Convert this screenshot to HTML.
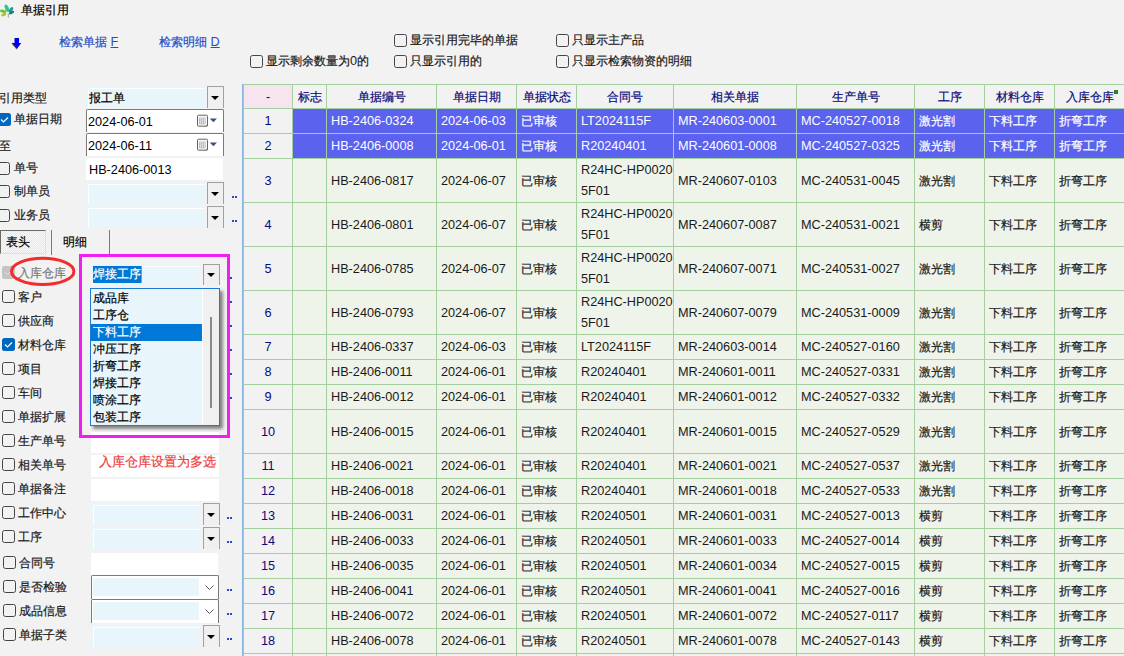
<!DOCTYPE html><html><head><meta charset="utf-8"><style>
html,body{margin:0;padding:0;}
body{width:1124px;height:656px;overflow:hidden;position:relative;background:#f2f2f2;font-family:"Liberation Sans",sans-serif;font-size:12.7px;color:#1a1a1a;}
div{position:absolute;box-sizing:border-box;}
.tx{white-space:nowrap;}
i{font-style:normal;font-size:12px;-webkit-text-stroke:0.2px currentColor;}

.cb{width:13px;height:13px;border:1px solid #444;border-radius:2.5px;background:#fff0;}
.cbk{width:13px;height:13px;border-radius:2.5px;background:#0067c0;}
.lb{background:#e8f6fb;}
.btn{border:1px solid #a0a0a0;border-bottom:none;background:#f0f0f0;}
.tri{width:0;height:0;border-left:4px solid transparent;border-right:4px solid transparent;border-top:4px solid #000;}
.dots{width:5px;height:2px;background:linear-gradient(90deg,#2848c8 0 2px,transparent 2px 3px,#2848c8 3px 5px);}
.wh{background:#fff;}
</style></head><body>
<svg style="position:absolute;left:0;top:0" width="18" height="19" viewBox="0 0 18 19">
<ellipse cx="3.2" cy="11.3" rx="3.4" ry="1.5" transform="rotate(12 3.2 11.3)" fill="#78c03a"/>
<ellipse cx="3.8" cy="14.6" rx="2.8" ry="1.5" transform="rotate(-22 3.8 14.6)" fill="#a6c82e"/>
<ellipse cx="6.9" cy="8.3" rx="1.9" ry="4.0" transform="rotate(-22 6.9 8.3)" fill="#2ec48e"/>
<ellipse cx="11" cy="9.8" rx="1.6" ry="3.0" transform="rotate(35 11 9.8)" fill="#1c9a92"/>
<ellipse cx="11.6" cy="12.6" rx="2.9" ry="1.4" transform="rotate(-25 11.6 12.6)" fill="#168078"/>
<path d="M8.3 13.5 L8.4 17.5" stroke="#9a9a9a" stroke-width="0.9"/>
</svg>
<div class="tx" style="left:21px;top:0px;height:21px;line-height:21px;color:#000;"><i>单据引用</i></div>
<svg style="position:absolute;left:10px;top:36px" width="14" height="15" viewBox="0 0 14 15">
<path d="M2 7 L7 13" stroke="#6a6a40" stroke-width="1.2"/>
<path d="M4.5 2 H9 V7 H11.3 L7 12.8 L2 7 H4.5Z" fill="#0000f0"/></svg>
<div class="tx" style="left:59px;top:32px;height:20px;line-height:20px;color:#1f4fc8;"><i>检索单据</i> <u>F</u></div>
<div class="tx" style="left:159px;top:32px;height:20px;line-height:20px;color:#1f4fc8;"><i>检索明细</i> <u>D</u></div>
<div class="cb" style="left:250px;top:55px;"></div>
<div class="tx" style="left:266px;top:51px;height:21px;line-height:21px;"><i>显示剩余数量为</i>0<i>的</i></div>
<div class="cb" style="left:394px;top:34px;"></div>
<div class="tx" style="left:410px;top:30px;height:21px;line-height:21px;"><i>显示引用完毕的单据</i></div>
<div class="cb" style="left:394px;top:55px;"></div>
<div class="tx" style="left:410px;top:51px;height:21px;line-height:21px;"><i>只显示引用的</i></div>
<div class="cb" style="left:556px;top:34px;"></div>
<div class="tx" style="left:572px;top:30px;height:21px;line-height:21px;"><i>只显示主产品</i></div>
<div class="cb" style="left:556px;top:55px;"></div>
<div class="tx" style="left:572px;top:51px;height:21px;line-height:21px;"><i>只显示检索物资的明细</i></div>
<div class="tx" style="left:-1px;top:88px;height:21px;line-height:21px;"><i>引用类型</i></div>
<div style="left:86px;top:86px;width:119px;height:22px;background:#e8f6fb;"></div>
<div style="left:88px;top:88px;width:117px;height:20px;border-top:1px solid #fff;border-left:1px solid #fff;"></div>
<div style="left:207px;top:86px;width:17px;height:22px;border:1px solid #a0a0a0;border-bottom:none;background:#f0f0f0;"></div>
<div class="tri" style="left:211px;top:96px;"></div>
<div class="tx" style="left:89px;top:87px;height:22px;line-height:22px;color:#000;"><i>报工单</i></div>
<div class="cbk" style="left:-2px;top:113px;"></div>
<svg style="position:absolute;left:-2px;top:113px" width="13" height="13"><path d="M3 6.5 L5.5 9 L10 4.5" stroke="#fff" stroke-width="1.1" fill="none"/></svg>
<div class="tx" style="left:14px;top:109px;height:21px;line-height:21px;"><i>单据日期</i></div>
<div style="left:86px;top:109px;width:138px;height:23px;background:#fff;border:1px solid #7a7a7a;border-bottom:none;border-radius:2px 2px 0 0;"></div>
<div class="tx" style="left:88px;top:111px;height:23px;line-height:23px;color:#000;">2024-06-01</div>
<svg style="position:absolute;left:196px;top:114px" width="24" height="14" viewBox="0 0 24 14"><rect x="1.5" y="1.2" width="10" height="11" rx="1" fill="#f6f7fb" stroke="#6e605c"/><rect x="3" y="3.6" width="6.6" height="6.8" fill="#b8bcc6"/><g fill="#fff"><rect x="3.9" y="4.4" width="1" height="1"/><rect x="5.9" y="4.4" width="1" height="1"/><rect x="7.9" y="4.4" width="1" height="1"/><rect x="3.9" y="6.4" width="1" height="1"/><rect x="5.9" y="6.4" width="1" height="1"/><rect x="7.9" y="6.4" width="1" height="1"/><rect x="3.9" y="8.4" width="1" height="1"/><rect x="5.9" y="8.4" width="1" height="1"/><rect x="7.9" y="8.4" width="1" height="1"/></g><path d="M9.5 12.2 L11.5 10.2 L11.5 12.2Z" fill="#6e605c"/><path d="M14 9 L21 9" stroke="#fff" /><path d="M13.8 4.5 H21 L17.4 8.3Z" fill="#3a5080"/></svg>
<div class="tx" style="left:-1px;top:136px;height:21px;line-height:21px;"><i>至</i></div>
<div style="left:86px;top:133px;width:138px;height:23px;background:#fff;border:1px solid #7a7a7a;border-bottom:none;border-radius:2px 2px 0 0;"></div>
<div class="tx" style="left:88px;top:135px;height:23px;line-height:23px;color:#000;">2024-06-11</div>
<svg style="position:absolute;left:196px;top:138px" width="24" height="14" viewBox="0 0 24 14"><rect x="1.5" y="1.2" width="10" height="11" rx="1" fill="#f6f7fb" stroke="#6e605c"/><rect x="3" y="3.6" width="6.6" height="6.8" fill="#b8bcc6"/><g fill="#fff"><rect x="3.9" y="4.4" width="1" height="1"/><rect x="5.9" y="4.4" width="1" height="1"/><rect x="7.9" y="4.4" width="1" height="1"/><rect x="3.9" y="6.4" width="1" height="1"/><rect x="5.9" y="6.4" width="1" height="1"/><rect x="7.9" y="6.4" width="1" height="1"/><rect x="3.9" y="8.4" width="1" height="1"/><rect x="5.9" y="8.4" width="1" height="1"/><rect x="7.9" y="8.4" width="1" height="1"/></g><path d="M9.5 12.2 L11.5 10.2 L11.5 12.2Z" fill="#6e605c"/><path d="M14 9 L21 9" stroke="#fff" /><path d="M13.8 4.5 H21 L17.4 8.3Z" fill="#3a5080"/></svg>
<div class="cb" style="left:-3px;top:162px;"></div>
<div class="tx" style="left:14px;top:158px;height:21px;line-height:21px;"><i>单号</i></div>
<div style="left:86px;top:158px;width:137px;height:22px;background:#fff;"></div>
<div class="tx" style="left:89px;top:159px;height:23px;line-height:23px;color:#000;">HB-2406-0013</div>
<div class="cb" style="left:-3px;top:185px;"></div>
<div class="tx" style="left:14px;top:181px;height:21px;line-height:21px;"><i>制单员</i></div>
<div style="left:86px;top:182px;width:119px;height:22px;background:#e8f6fb;"></div>
<div style="left:88px;top:184px;width:117px;height:20px;border-top:1px solid #fff;border-left:1px solid #fff;"></div>
<div style="left:207px;top:182px;width:17px;height:22px;border:1px solid #a0a0a0;border-bottom:none;background:#f0f0f0;"></div>
<div class="tri" style="left:211px;top:192px;"></div>
<div class="dots" style="left:232px;top:196px;"></div>
<div class="cb" style="left:-3px;top:209px;"></div>
<div class="tx" style="left:14px;top:205px;height:21px;line-height:21px;"><i>业务员</i></div>
<div style="left:86px;top:206px;width:119px;height:22px;background:#e8f6fb;"></div>
<div style="left:88px;top:208px;width:117px;height:20px;border-top:1px solid #fff;border-left:1px solid #fff;"></div>
<div style="left:207px;top:206px;width:17px;height:22px;border:1px solid #a0a0a0;border-bottom:none;background:#f0f0f0;"></div>
<div class="tri" style="left:211px;top:216px;"></div>
<div class="dots" style="left:232px;top:220px;"></div>
<div style="left:0px;top:230px;width:46px;height:24px;border-top:1px solid #6a6a6a;border-left:1px solid #6a6a6a;border-right:1px solid #e0e0e0;border-bottom:1px solid #e0e0e0;background-color:#fafafa;background-image:repeating-conic-gradient(#e6e6e6 0 25%,#fafafa 0 50%);background-size:2px 2px;"></div>
<div class="tx" style="left:6px;top:231px;height:22px;line-height:22px;color:#000;"><i>表头</i></div>
<div style="left:51px;top:230px;width:1px;height:25px;background:#7a7a7a;"></div>
<div class="tx" style="left:63px;top:231px;height:22px;line-height:22px;color:#000;"><i>明细</i></div>
<div style="left:109px;top:230px;width:1px;height:25px;background:#7a7a7a;"></div>
<div style="left:2px;top:266px;width:13px;height:13px;border-radius:2.5px;background:#c4c4c4;"></div>
<svg style="position:absolute;left:2px;top:266px" width="13" height="13"><path d="M3.5 6.5 L5.5 8.5 L9.5 4.5" stroke="#e6e6e6" stroke-width="1" fill="none"/></svg>
<div class="tx" style="left:18px;top:263px;height:21px;line-height:21px;color:#7a7a7a;"><i>入库仓库</i></div>
<div class="cb" style="left:2px;top:290px;"></div>
<div class="tx" style="left:18px;top:287px;height:21px;line-height:21px;"><i>客户</i></div>
<div class="cb" style="left:2px;top:314px;"></div>
<div class="tx" style="left:18px;top:311px;height:21px;line-height:21px;"><i>供应商</i></div>
<div class="cbk" style="left:2px;top:338px;"></div>
<svg style="position:absolute;left:2px;top:338px" width="13" height="13"><path d="M3 6.5 L5.5 9 L10 4.5" stroke="#fff" stroke-width="1.1" fill="none"/></svg>
<div class="tx" style="left:18px;top:335px;height:21px;line-height:21px;"><i>材料仓库</i></div>
<div class="cb" style="left:2px;top:362px;"></div>
<div class="tx" style="left:18px;top:359px;height:21px;line-height:21px;"><i>项目</i></div>
<div class="cb" style="left:2px;top:386px;"></div>
<div class="tx" style="left:18px;top:383px;height:21px;line-height:21px;"><i>车间</i></div>
<div class="cb" style="left:2px;top:410px;"></div>
<div class="tx" style="left:18px;top:407px;height:21px;line-height:21px;"><i>单据扩展</i></div>
<div class="cb" style="left:2px;top:434px;"></div>
<div class="tx" style="left:18px;top:431px;height:21px;line-height:21px;"><i>生产单号</i></div>
<div class="cb" style="left:2px;top:458px;"></div>
<div class="tx" style="left:18px;top:455px;height:21px;line-height:21px;"><i>相关单号</i></div>
<div class="cb" style="left:2px;top:482px;"></div>
<div class="tx" style="left:18px;top:479px;height:21px;line-height:21px;"><i>单据备注</i></div>
<div class="cb" style="left:2px;top:506px;"></div>
<div class="tx" style="left:18px;top:503px;height:21px;line-height:21px;"><i>工作中心</i></div>
<div class="cb" style="left:2px;top:530px;"></div>
<div class="tx" style="left:18px;top:527px;height:21px;line-height:21px;"><i>工序</i></div>
<div class="cb" style="left:3px;top:556px;"></div>
<div class="tx" style="left:19px;top:553px;height:21px;line-height:21px;"><i>合同号</i></div>
<div class="cb" style="left:3px;top:580px;"></div>
<div class="tx" style="left:19px;top:577px;height:21px;line-height:21px;"><i>是否检验</i></div>
<div class="cb" style="left:3px;top:604px;"></div>
<div class="tx" style="left:19px;top:601px;height:21px;line-height:21px;"><i>成品信息</i></div>
<div class="cb" style="left:3px;top:628px;"></div>
<div class="tx" style="left:19px;top:625px;height:21px;line-height:21px;"><i>单据子类</i></div>
<div class="dots" style="left:227px;top:277px;"></div>
<div class="dots" style="left:227px;top:301px;"></div>
<div class="dots" style="left:227px;top:325px;"></div>
<div class="dots" style="left:227px;top:349px;"></div>
<div class="dots" style="left:227px;top:373px;"></div>
<div class="dots" style="left:227px;top:397px;"></div>
<div style="left:91px;top:432px;width:128px;height:21px;background:#fff;"></div>
<div style="left:91px;top:455px;width:128px;height:22px;background:#fff;"></div>
<div class="tx" style="left:99px;top:451px;height:22px;line-height:22px;color:#f03a3a;"><i style="font-size:13px">入库仓库设置为多选</i></div>
<style>.red i{font-size:13px}</style>
<div style="left:91px;top:479px;width:128px;height:22px;background:#fff;"></div>
<div style="left:91px;top:503px;width:109px;height:22px;background:#e8f6fb;"></div>
<div style="left:93px;top:505px;width:107px;height:20px;border-top:1px solid #fff;border-left:1px solid #fff;"></div>
<div style="left:203px;top:503px;width:17px;height:22px;border:1px solid #a0a0a0;border-bottom:none;background:#f0f0f0;"></div>
<div class="tri" style="left:207px;top:513px;"></div>
<div class="dots" style="left:227px;top:517px;"></div>
<div style="left:91px;top:527px;width:109px;height:22px;background:#e8f6fb;"></div>
<div style="left:93px;top:529px;width:107px;height:20px;border-top:1px solid #fff;border-left:1px solid #fff;"></div>
<div style="left:203px;top:527px;width:17px;height:22px;border:1px solid #a0a0a0;border-bottom:none;background:#f0f0f0;"></div>
<div class="tri" style="left:207px;top:537px;"></div>
<div class="dots" style="left:227px;top:541px;"></div>
<div style="left:91px;top:553px;width:127px;height:22px;background:#fff;"></div>
<div style="left:91px;top:575px;width:128px;height:24px;background:#fff;border:1px solid #7a7a7a;border-bottom:none;border-radius:2px 2px 0 0;"></div>
<div style="left:93px;top:578px;width:106px;height:18px;background:#e8f6fb;"></div>
<svg style="position:absolute;left:205px;top:585px" width="10" height="6"><path d="M0.5 0.5 L4.5 4.5 L8.5 0.5" stroke="#555" fill="none"/></svg>
<div class="dots" style="left:227px;top:589px;"></div>
<div style="left:91px;top:599px;width:128px;height:24px;background:#fff;border:1px solid #7a7a7a;border-bottom:none;border-radius:2px 2px 0 0;"></div>
<div style="left:93px;top:602px;width:106px;height:18px;background:#e8f6fb;"></div>
<svg style="position:absolute;left:205px;top:609px" width="10" height="6"><path d="M0.5 0.5 L4.5 4.5 L8.5 0.5" stroke="#555" fill="none"/></svg>
<div class="dots" style="left:227px;top:613px;"></div>
<div style="left:91px;top:625px;width:109px;height:22px;background:#e8f6fb;"></div>
<div style="left:93px;top:627px;width:107px;height:20px;border-top:1px solid #fff;border-left:1px solid #fff;"></div>
<div style="left:203px;top:625px;width:17px;height:22px;border:1px solid #a0a0a0;border-bottom:none;background:#f0f0f0;"></div>
<div class="tri" style="left:207px;top:635px;"></div>
<div class="dots" style="left:227px;top:638px;"></div>
<div style="left:91px;top:264px;width:109px;height:21px;background:#e8f6fb;"></div>
<div style="left:93px;top:266px;width:107px;height:19px;border-top:1px solid #fff;border-left:1px solid #fff;"></div>
<div style="left:203px;top:264px;width:17px;height:21px;border:1px solid #a0a0a0;border-bottom:none;background:#f0f0f0;"></div>
<div class="tri" style="left:207px;top:273px;"></div>
<div class="tx" style="left:93px;top:266px;height:17px;line-height:17px;background:#0078d7;color:#fff;padding-right:1px;"><i>焊接工序</i></div>
<div style="left:141px;top:266px;width:1px;height:17px;background:#f08020;"></div>
<div style="left:90px;top:288px;width:130px;height:138px;border:1px solid #1a7ad4;background:#e8f6fc;box-shadow:3px 3px 3px rgba(0,0,0,0.45);"></div>
<div style="left:202px;top:289px;width:17px;height:136px;background:#f0f0f0;border-left:1px solid #fff;"></div>
<div style="left:210px;top:317px;width:2px;height:91px;background:#8a8a8a;"></div>
<div class="tx" style="left:93px;top:290px;height:17px;line-height:17px;color:#000;"><i>成品库</i></div>
<div class="tx" style="left:93px;top:307px;height:17px;line-height:17px;color:#000;"><i>工序仓</i></div>
<div style="left:91px;top:324px;width:111px;height:17px;background:#0078d7;"></div>
<div class="tx" style="left:93px;top:324px;height:17px;line-height:17px;color:#fff;"><i>下料工序</i></div>
<div class="tx" style="left:93px;top:341px;height:17px;line-height:17px;color:#000;"><i>冲压工序</i></div>
<div class="tx" style="left:93px;top:358px;height:17px;line-height:17px;color:#000;"><i>折弯工序</i></div>
<div class="tx" style="left:93px;top:375px;height:17px;line-height:17px;color:#000;"><i>焊接工序</i></div>
<div class="tx" style="left:93px;top:392px;height:17px;line-height:17px;color:#000;"><i>喷涂工序</i></div>
<div class="tx" style="left:93px;top:409px;height:17px;line-height:17px;color:#000;"><i>包装工序</i></div>
<div style="left:79px;top:254px;width:151px;height:184px;border:3px solid #f01ef0;"></div>
<svg style="position:absolute;left:0;top:250px" width="80" height="40"><ellipse cx="42.7" cy="21.4" rx="31.2" ry="13.1" fill="none" stroke="#f52a2a" stroke-width="3"/></svg>
<div style="left:243px;top:84px;width:881px;height:572px;background:#eef4e9;"></div>
<div style="left:243px;top:84px;width:881px;height:24px;background:#f2f2f2;"></div>
<div style="left:243px;top:84px;width:49px;height:24px;background:#f6e5ee;"></div>
<div style="left:243px;top:108px;width:49px;height:548px;background:#f2f2f2;"></div>
<div style="left:292px;top:108px;width:832px;height:50px;background:#5a62ee;"></div>
<div style="left:242px;top:84px;width:1px;height:572px;background:#8ab4e0;"></div>
<div style="left:243px;top:84px;width:1px;height:572px;background:#a6cfa0;"></div>
<div style="left:292px;top:84px;width:1px;height:572px;background:#a6cfa0;"></div>
<div style="left:326px;top:84px;width:1px;height:572px;background:#a6cfa0;"></div>
<div style="left:436px;top:84px;width:1px;height:572px;background:#a6cfa0;"></div>
<div style="left:516px;top:84px;width:1px;height:572px;background:#a6cfa0;"></div>
<div style="left:576px;top:84px;width:1px;height:572px;background:#a6cfa0;"></div>
<div style="left:673px;top:84px;width:1px;height:572px;background:#a6cfa0;"></div>
<div style="left:796px;top:84px;width:1px;height:572px;background:#a6cfa0;"></div>
<div style="left:914px;top:84px;width:1px;height:572px;background:#a6cfa0;"></div>
<div style="left:984px;top:84px;width:1px;height:572px;background:#a6cfa0;"></div>
<div style="left:1054px;top:84px;width:1px;height:572px;background:#a6cfa0;"></div>
<div style="left:243px;top:84px;width:881px;height:1px;background:#a6cfa0;"></div>
<div style="left:243px;top:108px;width:881px;height:1px;background:#a6cfa0;"></div>
<div style="left:243px;top:133px;width:881px;height:1px;background:#a6cfa0;"></div>
<div style="left:243px;top:158px;width:881px;height:1px;background:#a6cfa0;"></div>
<div style="left:243px;top:202px;width:881px;height:1px;background:#a6cfa0;"></div>
<div style="left:243px;top:246px;width:881px;height:1px;background:#a6cfa0;"></div>
<div style="left:243px;top:290px;width:881px;height:1px;background:#a6cfa0;"></div>
<div style="left:243px;top:334px;width:881px;height:1px;background:#a6cfa0;"></div>
<div style="left:243px;top:359px;width:881px;height:1px;background:#a6cfa0;"></div>
<div style="left:243px;top:384px;width:881px;height:1px;background:#a6cfa0;"></div>
<div style="left:243px;top:409px;width:881px;height:1px;background:#a6cfa0;"></div>
<div style="left:243px;top:453px;width:881px;height:1px;background:#a6cfa0;"></div>
<div style="left:243px;top:478px;width:881px;height:1px;background:#a6cfa0;"></div>
<div style="left:243px;top:503px;width:881px;height:1px;background:#a6cfa0;"></div>
<div style="left:243px;top:528px;width:881px;height:1px;background:#a6cfa0;"></div>
<div style="left:243px;top:553px;width:881px;height:1px;background:#a6cfa0;"></div>
<div style="left:243px;top:578px;width:881px;height:1px;background:#a6cfa0;"></div>
<div style="left:243px;top:603px;width:881px;height:1px;background:#a6cfa0;"></div>
<div style="left:243px;top:628px;width:881px;height:1px;background:#a6cfa0;"></div>
<div style="left:243px;top:653px;width:881px;height:1px;background:#a6cfa0;"></div>
<div class="tx" style="left:244px;top:86px;width:48px;height:23px;line-height:23px;text-align:center;color:#0a0a78;">-</div>
<div class="tx" style="left:293px;top:86px;width:33px;height:23px;line-height:23px;text-align:center;color:#0a0a78;"><i>标志</i></div>
<div class="tx" style="left:327px;top:86px;width:109px;height:23px;line-height:23px;text-align:center;color:#0a0a78;"><i>单据编号</i></div>
<div class="tx" style="left:437px;top:86px;width:79px;height:23px;line-height:23px;text-align:center;color:#0a0a78;"><i>单据日期</i></div>
<div class="tx" style="left:517px;top:86px;width:59px;height:23px;line-height:23px;text-align:center;color:#0a0a78;"><i>单据状态</i></div>
<div class="tx" style="left:577px;top:86px;width:96px;height:23px;line-height:23px;text-align:center;color:#0a0a78;"><i>合同号</i></div>
<div class="tx" style="left:674px;top:86px;width:122px;height:23px;line-height:23px;text-align:center;color:#0a0a78;"><i>相关单据</i></div>
<div class="tx" style="left:797px;top:86px;width:117px;height:23px;line-height:23px;text-align:center;color:#0a0a78;"><i>生产单号</i></div>
<div class="tx" style="left:915px;top:86px;width:69px;height:23px;line-height:23px;text-align:center;color:#0a0a78;"><i>工序</i></div>
<div class="tx" style="left:985px;top:86px;width:69px;height:23px;line-height:23px;text-align:center;color:#0a0a78;"><i>材料仓库</i></div>
<div class="tx" style="left:1055px;top:86px;width:69px;height:23px;line-height:23px;text-align:center;color:#0a0a78;"><i>入库仓库</i></div>
<div style="left:1114px;top:90px;width:4px;height:4px;background:#2e8020;"></div>
<div class="tx" style="left:244px;top:109px;width:48px;height:24px;line-height:24px;text-align:center;color:#0a0a78;">1</div>
<div class="tx" style="left:331px;top:109px;height:24px;line-height:24px;color:#fff;">HB-2406-0324</div>
<div class="tx" style="left:441px;top:109px;height:24px;line-height:24px;color:#fff;">2024-06-03</div>
<div class="tx" style="left:521px;top:109px;height:24px;line-height:24px;color:#fff;"><i>已审核</i></div>
<div class="tx" style="left:581px;top:109px;height:24px;line-height:24px;color:#fff;">LT2024115F</div>
<div class="tx" style="left:678px;top:109px;height:24px;line-height:24px;color:#fff;">MR-240603-0001</div>
<div class="tx" style="left:801px;top:109px;height:24px;line-height:24px;color:#fff;">MC-240527-0018</div>
<div class="tx" style="left:919px;top:109px;height:24px;line-height:24px;color:#fff;"><i>激光割</i></div>
<div class="tx" style="left:989px;top:109px;height:24px;line-height:24px;color:#fff;"><i>下料工序</i></div>
<div class="tx" style="left:1059px;top:109px;height:24px;line-height:24px;color:#fff;"><i>折弯工序</i></div>
<div class="tx" style="left:244px;top:134px;width:48px;height:24px;line-height:24px;text-align:center;color:#0a0a78;">2</div>
<div class="tx" style="left:331px;top:134px;height:24px;line-height:24px;color:#fff;">HB-2406-0008</div>
<div class="tx" style="left:441px;top:134px;height:24px;line-height:24px;color:#fff;">2024-06-01</div>
<div class="tx" style="left:521px;top:134px;height:24px;line-height:24px;color:#fff;"><i>已审核</i></div>
<div class="tx" style="left:581px;top:134px;height:24px;line-height:24px;color:#fff;">R20240401</div>
<div class="tx" style="left:678px;top:134px;height:24px;line-height:24px;color:#fff;">MR-240601-0008</div>
<div class="tx" style="left:801px;top:134px;height:24px;line-height:24px;color:#fff;">MC-240527-0325</div>
<div class="tx" style="left:919px;top:134px;height:24px;line-height:24px;color:#fff;"><i>激光割</i></div>
<div class="tx" style="left:989px;top:134px;height:24px;line-height:24px;color:#fff;"><i>下料工序</i></div>
<div class="tx" style="left:1059px;top:134px;height:24px;line-height:24px;color:#fff;"><i>折弯工序</i></div>
<div class="tx" style="left:244px;top:160px;width:48px;height:43px;line-height:43px;text-align:center;color:#0a0a78;">3</div>
<div class="tx" style="left:331px;top:160px;height:43px;line-height:43px;color:#1a1a1a;">HB-2406-0817</div>
<div class="tx" style="left:441px;top:160px;height:43px;line-height:43px;color:#1a1a1a;">2024-06-07</div>
<div class="tx" style="left:521px;top:160px;height:43px;line-height:43px;color:#1a1a1a;"><i>已审核</i></div>
<div class="tx" style="left:581px;top:160px;height:43px;line-height:21px;padding-top:0px;color:#1a1a1a;">R24HC-HP0020<br>5F01</div>
<div class="tx" style="left:678px;top:160px;height:43px;line-height:43px;color:#1a1a1a;">MR-240607-0103</div>
<div class="tx" style="left:801px;top:160px;height:43px;line-height:43px;color:#1a1a1a;">MC-240531-0045</div>
<div class="tx" style="left:919px;top:160px;height:43px;line-height:43px;color:#1a1a1a;"><i>激光割</i></div>
<div class="tx" style="left:989px;top:160px;height:43px;line-height:43px;color:#1a1a1a;"><i>下料工序</i></div>
<div class="tx" style="left:1059px;top:160px;height:43px;line-height:43px;color:#1a1a1a;"><i>折弯工序</i></div>
<div class="tx" style="left:244px;top:204px;width:48px;height:43px;line-height:43px;text-align:center;color:#0a0a78;">4</div>
<div class="tx" style="left:331px;top:204px;height:43px;line-height:43px;color:#1a1a1a;">HB-2406-0801</div>
<div class="tx" style="left:441px;top:204px;height:43px;line-height:43px;color:#1a1a1a;">2024-06-07</div>
<div class="tx" style="left:521px;top:204px;height:43px;line-height:43px;color:#1a1a1a;"><i>已审核</i></div>
<div class="tx" style="left:581px;top:204px;height:43px;line-height:21px;padding-top:0px;color:#1a1a1a;">R24HC-HP0020<br>5F01</div>
<div class="tx" style="left:678px;top:204px;height:43px;line-height:43px;color:#1a1a1a;">MR-240607-0087</div>
<div class="tx" style="left:801px;top:204px;height:43px;line-height:43px;color:#1a1a1a;">MC-240531-0021</div>
<div class="tx" style="left:919px;top:204px;height:43px;line-height:43px;color:#1a1a1a;"><i>横剪</i></div>
<div class="tx" style="left:989px;top:204px;height:43px;line-height:43px;color:#1a1a1a;"><i>下料工序</i></div>
<div class="tx" style="left:1059px;top:204px;height:43px;line-height:43px;color:#1a1a1a;"><i>折弯工序</i></div>
<div class="tx" style="left:244px;top:248px;width:48px;height:43px;line-height:43px;text-align:center;color:#0a0a78;">5</div>
<div class="tx" style="left:331px;top:248px;height:43px;line-height:43px;color:#1a1a1a;">HB-2406-0785</div>
<div class="tx" style="left:441px;top:248px;height:43px;line-height:43px;color:#1a1a1a;">2024-06-07</div>
<div class="tx" style="left:521px;top:248px;height:43px;line-height:43px;color:#1a1a1a;"><i>已审核</i></div>
<div class="tx" style="left:581px;top:248px;height:43px;line-height:21px;padding-top:0px;color:#1a1a1a;">R24HC-HP0020<br>5F01</div>
<div class="tx" style="left:678px;top:248px;height:43px;line-height:43px;color:#1a1a1a;">MR-240607-0071</div>
<div class="tx" style="left:801px;top:248px;height:43px;line-height:43px;color:#1a1a1a;">MC-240531-0027</div>
<div class="tx" style="left:919px;top:248px;height:43px;line-height:43px;color:#1a1a1a;"><i>激光割</i></div>
<div class="tx" style="left:989px;top:248px;height:43px;line-height:43px;color:#1a1a1a;"><i>下料工序</i></div>
<div class="tx" style="left:1059px;top:248px;height:43px;line-height:43px;color:#1a1a1a;"><i>折弯工序</i></div>
<div class="tx" style="left:244px;top:292px;width:48px;height:43px;line-height:43px;text-align:center;color:#0a0a78;">6</div>
<div class="tx" style="left:331px;top:292px;height:43px;line-height:43px;color:#1a1a1a;">HB-2406-0793</div>
<div class="tx" style="left:441px;top:292px;height:43px;line-height:43px;color:#1a1a1a;">2024-06-07</div>
<div class="tx" style="left:521px;top:292px;height:43px;line-height:43px;color:#1a1a1a;"><i>已审核</i></div>
<div class="tx" style="left:581px;top:292px;height:43px;line-height:21px;padding-top:0px;color:#1a1a1a;">R24HC-HP0020<br>5F01</div>
<div class="tx" style="left:678px;top:292px;height:43px;line-height:43px;color:#1a1a1a;">MR-240607-0079</div>
<div class="tx" style="left:801px;top:292px;height:43px;line-height:43px;color:#1a1a1a;">MC-240531-0009</div>
<div class="tx" style="left:919px;top:292px;height:43px;line-height:43px;color:#1a1a1a;"><i>激光割</i></div>
<div class="tx" style="left:989px;top:292px;height:43px;line-height:43px;color:#1a1a1a;"><i>下料工序</i></div>
<div class="tx" style="left:1059px;top:292px;height:43px;line-height:43px;color:#1a1a1a;"><i>折弯工序</i></div>
<div class="tx" style="left:244px;top:335px;width:48px;height:24px;line-height:24px;text-align:center;color:#0a0a78;">7</div>
<div class="tx" style="left:331px;top:335px;height:24px;line-height:24px;color:#1a1a1a;">HB-2406-0337</div>
<div class="tx" style="left:441px;top:335px;height:24px;line-height:24px;color:#1a1a1a;">2024-06-03</div>
<div class="tx" style="left:521px;top:335px;height:24px;line-height:24px;color:#1a1a1a;"><i>已审核</i></div>
<div class="tx" style="left:581px;top:335px;height:24px;line-height:24px;color:#1a1a1a;">LT2024115F</div>
<div class="tx" style="left:678px;top:335px;height:24px;line-height:24px;color:#1a1a1a;">MR-240603-0014</div>
<div class="tx" style="left:801px;top:335px;height:24px;line-height:24px;color:#1a1a1a;">MC-240527-0160</div>
<div class="tx" style="left:919px;top:335px;height:24px;line-height:24px;color:#1a1a1a;"><i>激光割</i></div>
<div class="tx" style="left:989px;top:335px;height:24px;line-height:24px;color:#1a1a1a;"><i>下料工序</i></div>
<div class="tx" style="left:1059px;top:335px;height:24px;line-height:24px;color:#1a1a1a;"><i>折弯工序</i></div>
<div class="tx" style="left:244px;top:360px;width:48px;height:24px;line-height:24px;text-align:center;color:#0a0a78;">8</div>
<div class="tx" style="left:331px;top:360px;height:24px;line-height:24px;color:#1a1a1a;">HB-2406-0011</div>
<div class="tx" style="left:441px;top:360px;height:24px;line-height:24px;color:#1a1a1a;">2024-06-01</div>
<div class="tx" style="left:521px;top:360px;height:24px;line-height:24px;color:#1a1a1a;"><i>已审核</i></div>
<div class="tx" style="left:581px;top:360px;height:24px;line-height:24px;color:#1a1a1a;">R20240401</div>
<div class="tx" style="left:678px;top:360px;height:24px;line-height:24px;color:#1a1a1a;">MR-240601-0011</div>
<div class="tx" style="left:801px;top:360px;height:24px;line-height:24px;color:#1a1a1a;">MC-240527-0331</div>
<div class="tx" style="left:919px;top:360px;height:24px;line-height:24px;color:#1a1a1a;"><i>激光割</i></div>
<div class="tx" style="left:989px;top:360px;height:24px;line-height:24px;color:#1a1a1a;"><i>下料工序</i></div>
<div class="tx" style="left:1059px;top:360px;height:24px;line-height:24px;color:#1a1a1a;"><i>折弯工序</i></div>
<div class="tx" style="left:244px;top:385px;width:48px;height:24px;line-height:24px;text-align:center;color:#0a0a78;">9</div>
<div class="tx" style="left:331px;top:385px;height:24px;line-height:24px;color:#1a1a1a;">HB-2406-0012</div>
<div class="tx" style="left:441px;top:385px;height:24px;line-height:24px;color:#1a1a1a;">2024-06-01</div>
<div class="tx" style="left:521px;top:385px;height:24px;line-height:24px;color:#1a1a1a;"><i>已审核</i></div>
<div class="tx" style="left:581px;top:385px;height:24px;line-height:24px;color:#1a1a1a;">R20240401</div>
<div class="tx" style="left:678px;top:385px;height:24px;line-height:24px;color:#1a1a1a;">MR-240601-0012</div>
<div class="tx" style="left:801px;top:385px;height:24px;line-height:24px;color:#1a1a1a;">MC-240527-0332</div>
<div class="tx" style="left:919px;top:385px;height:24px;line-height:24px;color:#1a1a1a;"><i>激光割</i></div>
<div class="tx" style="left:989px;top:385px;height:24px;line-height:24px;color:#1a1a1a;"><i>下料工序</i></div>
<div class="tx" style="left:1059px;top:385px;height:24px;line-height:24px;color:#1a1a1a;"><i>折弯工序</i></div>
<div class="tx" style="left:244px;top:411px;width:48px;height:43px;line-height:43px;text-align:center;color:#0a0a78;">10</div>
<div class="tx" style="left:331px;top:411px;height:43px;line-height:43px;color:#1a1a1a;">HB-2406-0015</div>
<div class="tx" style="left:441px;top:411px;height:43px;line-height:43px;color:#1a1a1a;">2024-06-01</div>
<div class="tx" style="left:521px;top:411px;height:43px;line-height:43px;color:#1a1a1a;"><i>已审核</i></div>
<div class="tx" style="left:581px;top:411px;height:43px;line-height:43px;color:#1a1a1a;">R20240401</div>
<div class="tx" style="left:678px;top:411px;height:43px;line-height:43px;color:#1a1a1a;">MR-240601-0015</div>
<div class="tx" style="left:801px;top:411px;height:43px;line-height:43px;color:#1a1a1a;">MC-240527-0529</div>
<div class="tx" style="left:919px;top:411px;height:43px;line-height:43px;color:#1a1a1a;"><i>激光割</i></div>
<div class="tx" style="left:989px;top:411px;height:43px;line-height:43px;color:#1a1a1a;"><i>下料工序</i></div>
<div class="tx" style="left:1059px;top:411px;height:43px;line-height:43px;color:#1a1a1a;"><i>折弯工序</i></div>
<div class="tx" style="left:244px;top:454px;width:48px;height:24px;line-height:24px;text-align:center;color:#0a0a78;">11</div>
<div class="tx" style="left:331px;top:454px;height:24px;line-height:24px;color:#1a1a1a;">HB-2406-0021</div>
<div class="tx" style="left:441px;top:454px;height:24px;line-height:24px;color:#1a1a1a;">2024-06-01</div>
<div class="tx" style="left:521px;top:454px;height:24px;line-height:24px;color:#1a1a1a;"><i>已审核</i></div>
<div class="tx" style="left:581px;top:454px;height:24px;line-height:24px;color:#1a1a1a;">R20240401</div>
<div class="tx" style="left:678px;top:454px;height:24px;line-height:24px;color:#1a1a1a;">MR-240601-0021</div>
<div class="tx" style="left:801px;top:454px;height:24px;line-height:24px;color:#1a1a1a;">MC-240527-0537</div>
<div class="tx" style="left:919px;top:454px;height:24px;line-height:24px;color:#1a1a1a;"><i>激光割</i></div>
<div class="tx" style="left:989px;top:454px;height:24px;line-height:24px;color:#1a1a1a;"><i>下料工序</i></div>
<div class="tx" style="left:1059px;top:454px;height:24px;line-height:24px;color:#1a1a1a;"><i>折弯工序</i></div>
<div class="tx" style="left:244px;top:479px;width:48px;height:24px;line-height:24px;text-align:center;color:#0a0a78;">12</div>
<div class="tx" style="left:331px;top:479px;height:24px;line-height:24px;color:#1a1a1a;">HB-2406-0018</div>
<div class="tx" style="left:441px;top:479px;height:24px;line-height:24px;color:#1a1a1a;">2024-06-01</div>
<div class="tx" style="left:521px;top:479px;height:24px;line-height:24px;color:#1a1a1a;"><i>已审核</i></div>
<div class="tx" style="left:581px;top:479px;height:24px;line-height:24px;color:#1a1a1a;">R20240401</div>
<div class="tx" style="left:678px;top:479px;height:24px;line-height:24px;color:#1a1a1a;">MR-240601-0018</div>
<div class="tx" style="left:801px;top:479px;height:24px;line-height:24px;color:#1a1a1a;">MC-240527-0533</div>
<div class="tx" style="left:919px;top:479px;height:24px;line-height:24px;color:#1a1a1a;"><i>激光割</i></div>
<div class="tx" style="left:989px;top:479px;height:24px;line-height:24px;color:#1a1a1a;"><i>下料工序</i></div>
<div class="tx" style="left:1059px;top:479px;height:24px;line-height:24px;color:#1a1a1a;"><i>折弯工序</i></div>
<div class="tx" style="left:244px;top:504px;width:48px;height:24px;line-height:24px;text-align:center;color:#0a0a78;">13</div>
<div class="tx" style="left:331px;top:504px;height:24px;line-height:24px;color:#1a1a1a;">HB-2406-0031</div>
<div class="tx" style="left:441px;top:504px;height:24px;line-height:24px;color:#1a1a1a;">2024-06-01</div>
<div class="tx" style="left:521px;top:504px;height:24px;line-height:24px;color:#1a1a1a;"><i>已审核</i></div>
<div class="tx" style="left:581px;top:504px;height:24px;line-height:24px;color:#1a1a1a;">R20240501</div>
<div class="tx" style="left:678px;top:504px;height:24px;line-height:24px;color:#1a1a1a;">MR-240601-0031</div>
<div class="tx" style="left:801px;top:504px;height:24px;line-height:24px;color:#1a1a1a;">MC-240527-0013</div>
<div class="tx" style="left:919px;top:504px;height:24px;line-height:24px;color:#1a1a1a;"><i>横剪</i></div>
<div class="tx" style="left:989px;top:504px;height:24px;line-height:24px;color:#1a1a1a;"><i>下料工序</i></div>
<div class="tx" style="left:1059px;top:504px;height:24px;line-height:24px;color:#1a1a1a;"><i>折弯工序</i></div>
<div class="tx" style="left:244px;top:529px;width:48px;height:24px;line-height:24px;text-align:center;color:#0a0a78;">14</div>
<div class="tx" style="left:331px;top:529px;height:24px;line-height:24px;color:#1a1a1a;">HB-2406-0033</div>
<div class="tx" style="left:441px;top:529px;height:24px;line-height:24px;color:#1a1a1a;">2024-06-01</div>
<div class="tx" style="left:521px;top:529px;height:24px;line-height:24px;color:#1a1a1a;"><i>已审核</i></div>
<div class="tx" style="left:581px;top:529px;height:24px;line-height:24px;color:#1a1a1a;">R20240501</div>
<div class="tx" style="left:678px;top:529px;height:24px;line-height:24px;color:#1a1a1a;">MR-240601-0033</div>
<div class="tx" style="left:801px;top:529px;height:24px;line-height:24px;color:#1a1a1a;">MC-240527-0014</div>
<div class="tx" style="left:919px;top:529px;height:24px;line-height:24px;color:#1a1a1a;"><i>横剪</i></div>
<div class="tx" style="left:989px;top:529px;height:24px;line-height:24px;color:#1a1a1a;"><i>下料工序</i></div>
<div class="tx" style="left:1059px;top:529px;height:24px;line-height:24px;color:#1a1a1a;"><i>折弯工序</i></div>
<div class="tx" style="left:244px;top:554px;width:48px;height:24px;line-height:24px;text-align:center;color:#0a0a78;">15</div>
<div class="tx" style="left:331px;top:554px;height:24px;line-height:24px;color:#1a1a1a;">HB-2406-0035</div>
<div class="tx" style="left:441px;top:554px;height:24px;line-height:24px;color:#1a1a1a;">2024-06-01</div>
<div class="tx" style="left:521px;top:554px;height:24px;line-height:24px;color:#1a1a1a;"><i>已审核</i></div>
<div class="tx" style="left:581px;top:554px;height:24px;line-height:24px;color:#1a1a1a;">R20240501</div>
<div class="tx" style="left:678px;top:554px;height:24px;line-height:24px;color:#1a1a1a;">MR-240601-0034</div>
<div class="tx" style="left:801px;top:554px;height:24px;line-height:24px;color:#1a1a1a;">MC-240527-0015</div>
<div class="tx" style="left:919px;top:554px;height:24px;line-height:24px;color:#1a1a1a;"><i>横剪</i></div>
<div class="tx" style="left:989px;top:554px;height:24px;line-height:24px;color:#1a1a1a;"><i>下料工序</i></div>
<div class="tx" style="left:1059px;top:554px;height:24px;line-height:24px;color:#1a1a1a;"><i>折弯工序</i></div>
<div class="tx" style="left:244px;top:579px;width:48px;height:24px;line-height:24px;text-align:center;color:#0a0a78;">16</div>
<div class="tx" style="left:331px;top:579px;height:24px;line-height:24px;color:#1a1a1a;">HB-2406-0041</div>
<div class="tx" style="left:441px;top:579px;height:24px;line-height:24px;color:#1a1a1a;">2024-06-01</div>
<div class="tx" style="left:521px;top:579px;height:24px;line-height:24px;color:#1a1a1a;"><i>已审核</i></div>
<div class="tx" style="left:581px;top:579px;height:24px;line-height:24px;color:#1a1a1a;">R20240501</div>
<div class="tx" style="left:678px;top:579px;height:24px;line-height:24px;color:#1a1a1a;">MR-240601-0041</div>
<div class="tx" style="left:801px;top:579px;height:24px;line-height:24px;color:#1a1a1a;">MC-240527-0016</div>
<div class="tx" style="left:919px;top:579px;height:24px;line-height:24px;color:#1a1a1a;"><i>横剪</i></div>
<div class="tx" style="left:989px;top:579px;height:24px;line-height:24px;color:#1a1a1a;"><i>下料工序</i></div>
<div class="tx" style="left:1059px;top:579px;height:24px;line-height:24px;color:#1a1a1a;"><i>折弯工序</i></div>
<div class="tx" style="left:244px;top:604px;width:48px;height:24px;line-height:24px;text-align:center;color:#0a0a78;">17</div>
<div class="tx" style="left:331px;top:604px;height:24px;line-height:24px;color:#1a1a1a;">HB-2406-0072</div>
<div class="tx" style="left:441px;top:604px;height:24px;line-height:24px;color:#1a1a1a;">2024-06-01</div>
<div class="tx" style="left:521px;top:604px;height:24px;line-height:24px;color:#1a1a1a;"><i>已审核</i></div>
<div class="tx" style="left:581px;top:604px;height:24px;line-height:24px;color:#1a1a1a;">R20240501</div>
<div class="tx" style="left:678px;top:604px;height:24px;line-height:24px;color:#1a1a1a;">MR-240601-0072</div>
<div class="tx" style="left:801px;top:604px;height:24px;line-height:24px;color:#1a1a1a;">MC-240527-0117</div>
<div class="tx" style="left:919px;top:604px;height:24px;line-height:24px;color:#1a1a1a;"><i>横剪</i></div>
<div class="tx" style="left:989px;top:604px;height:24px;line-height:24px;color:#1a1a1a;"><i>下料工序</i></div>
<div class="tx" style="left:1059px;top:604px;height:24px;line-height:24px;color:#1a1a1a;"><i>折弯工序</i></div>
<div class="tx" style="left:244px;top:629px;width:48px;height:24px;line-height:24px;text-align:center;color:#0a0a78;">18</div>
<div class="tx" style="left:331px;top:629px;height:24px;line-height:24px;color:#1a1a1a;">HB-2406-0078</div>
<div class="tx" style="left:441px;top:629px;height:24px;line-height:24px;color:#1a1a1a;">2024-06-01</div>
<div class="tx" style="left:521px;top:629px;height:24px;line-height:24px;color:#1a1a1a;"><i>已审核</i></div>
<div class="tx" style="left:581px;top:629px;height:24px;line-height:24px;color:#1a1a1a;">R20240501</div>
<div class="tx" style="left:678px;top:629px;height:24px;line-height:24px;color:#1a1a1a;">MR-240601-0078</div>
<div class="tx" style="left:801px;top:629px;height:24px;line-height:24px;color:#1a1a1a;">MC-240527-0143</div>
<div class="tx" style="left:919px;top:629px;height:24px;line-height:24px;color:#1a1a1a;"><i>横剪</i></div>
<div class="tx" style="left:989px;top:629px;height:24px;line-height:24px;color:#1a1a1a;"><i>下料工序</i></div>
<div class="tx" style="left:1059px;top:629px;height:24px;line-height:24px;color:#1a1a1a;"><i>折弯工序</i></div>
</body></html>
